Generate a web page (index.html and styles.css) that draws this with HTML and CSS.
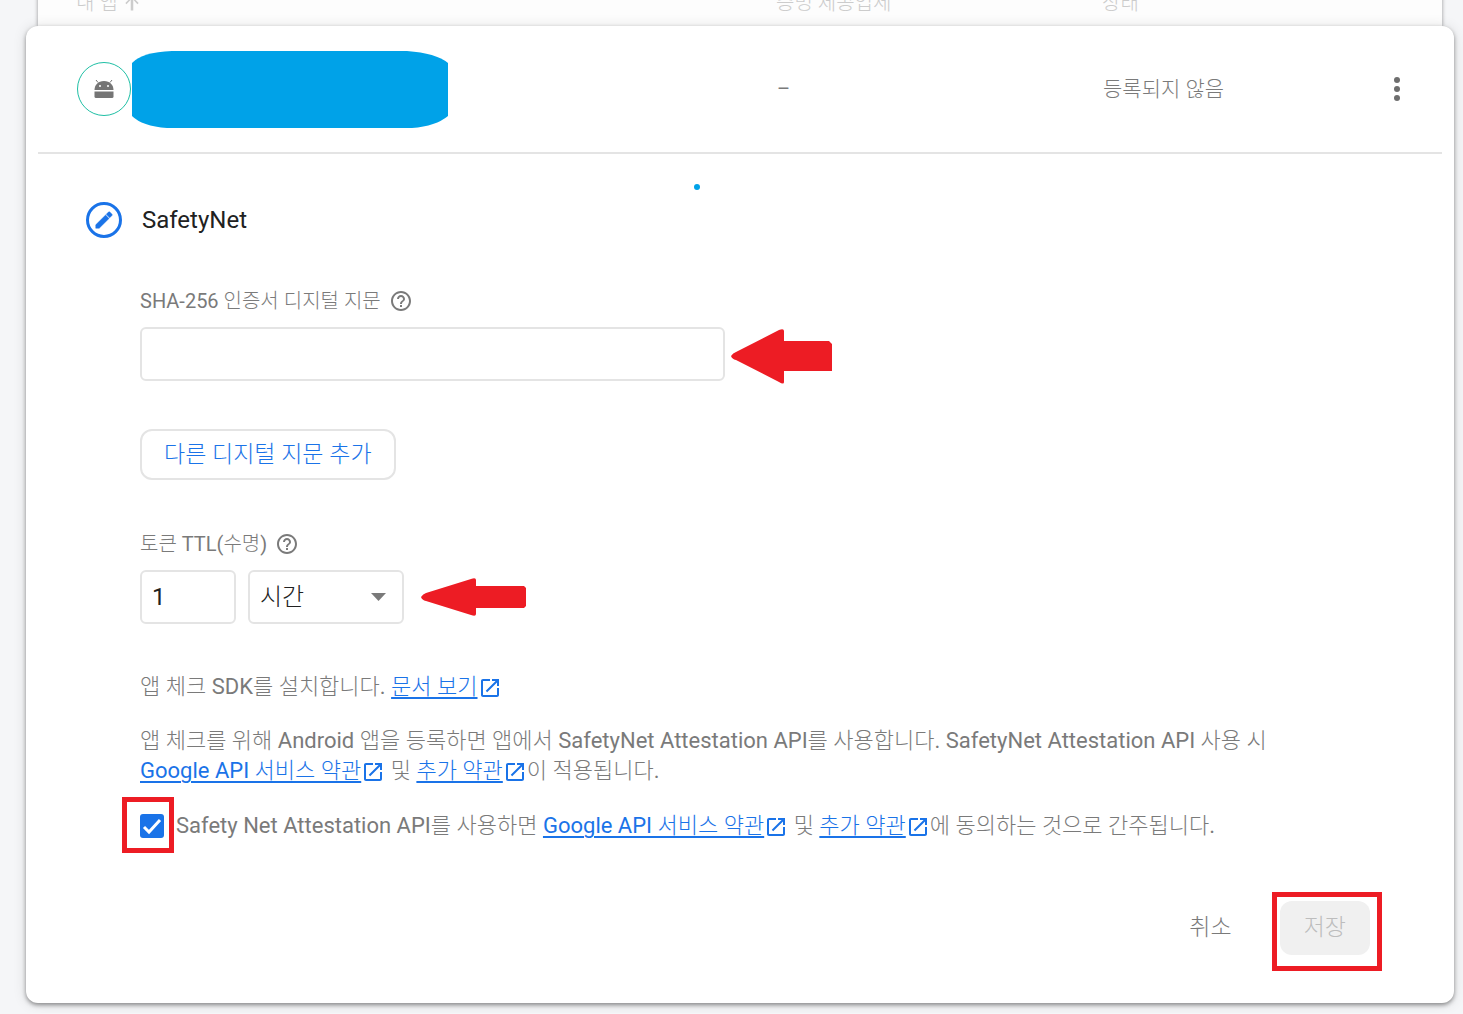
FILE: index.html
```html
<!DOCTYPE html>
<html lang="ko">
<head>
    <meta charset="UTF-8">
    <meta name="viewport" content="width=device-width, initial-scale=1.0">
    <title>앱 체크</title>
    <link rel="stylesheet" href="styles.css">
</head>
<body>
    <!-- shared icon shapes -->
    <svg class="sprite" aria-hidden="true">
        <symbol id="help" viewBox="0 0 24 24">
            <path d="M11 18h2v-2h-2v2zm1-16C6.48 2 2 6.48 2 12s4.48 10 10 10 10-4.48 10-10S17.52 2 12 2zm0 18c-4.41 0-8-3.59-8-8s3.59-8 8-8 8 3.59 8 8-3.59 8-8 8zm0-14c-2.21 0-4 1.79-4 4h2c0-1.1.9-2 2-2s2 .9 2 2c0 2-3 1.75-3 5h2c0-2.25 3-2.5 3-5 0-2.21-1.79-4-4-4z"/>
        </symbol>
        <symbol id="launch" viewBox="0 0 24 24">
            <path d="M19 19H5V5h7V3H5c-1.11 0-2 .9-2 2v14c0 1.1.89 2 2 2h14c1.1 0 2-.9 2-2v-7h-2v7zM14 3v2h3.59l-9.83 9.83 1.41 1.41L19 6.41V10h2V3h-7z"/>
        </symbol>
    </svg>

    <div class="table-head columns">
        <span class="sort">내 앱
            <svg class="sort-icon" viewBox="0 0 24 24"><path d="M4 12l1.400 1.400L10.500 8V21h3V8l5 5.400L20 12l-8-8-8 8z"/></svg>
        </span>
        <span>증명 제공업체</span>
        <span>상태</span>
    </div>

    <main class="card">
        <header class="app-row columns">
            <div class="app">
                <span class="app-icon">
                    <svg viewBox="0 0 20 20">
                        <path d="M0.500 11C0.500 6 4 2 10 2s9.500 4 9.500 9z"/>
                        <path d="M4 3.500L2 1M16 3.500l2-2.500" stroke="#757575" stroke-width="1"/>
                        <circle cx="6" cy="7" r="1" fill="#fff"/>
                        <circle cx="14" cy="7" r="1" fill="#fff"/>
                        <path d="M0.500 12.500h19v5q0 1.500-1.500 1.500H2q-1.500 0-1.500-1.500z"/>
                    </svg>
                </span>
                <svg class="app-name" viewBox="0 0 316 77" preserveAspectRatio="none">
                    <path d="M40 0H275Q304 2 316 12V65Q304 75 280 77H35Q10 75 0 65V12Q10 1 40 0z"/>
                </svg>
            </div>
            <span>–</span>
            <span class="status">등록되지 않음</span>
            <button class="menu-btn" type="button" aria-label="메뉴">
                <svg viewBox="0 0 36 36"><circle cx="18" cy="9" r="3"/><circle cx="18" cy="18" r="3"/><circle cx="18" cy="27" r="3"/></svg>
            </button>
        </header>

        <form class="provider">
            <span class="dot"></span>
            <div class="provider-title">
                <span class="step-icon">
                    <svg viewBox="0 0 24 24"><path d="M3 17.250V21h3.750L17.500 10.300l-3.750-3.750zM18.200 9.600l2.500-2.560c.39-.39.39-1.020 0-1.410l-2.340-2.340c-.39-.39-1.020-.39-1.410 0l-2.500 2.560z" stroke="currentColor" stroke-width="0.500" stroke-linejoin="round"/></svg>
                </span>
                <h2>SafetyNet</h2>
            </div>

            <div class="provider-body">
                <div class="label-row">
                    <label for="fingerprint">SHA-256 인증서 디지털 지문</label>
                    <svg class="help"><use href="#help"/></svg>
                </div>
                <div class="field-row">
                    <input class="field fingerprint" type="text" id="fingerprint">
                    <svg class="arrow arrow-large" viewBox="0 0 101 55"><path d="M0 27Q2 24 5 23L48 1Q53-1 53 2V12H98L101 15V42H53V53Q53 56 48 53L5 31Q1 30 0 27z"/></svg>
                </div>
                <button class="add-btn" type="button">다른 디지털 지문 추가</button>

                <div class="label-row">
                    <label for="ttl">토큰 TTL(수명)</label>
                    <svg class="help"><use href="#help"/></svg>
                </div>
                <div class="field-row">
                    <input class="field ttl" type="text" id="ttl" value="1">
                    <span class="select-wrap">
                        <select class="field" aria-label="단위">
                            <option>시간</option>
                            <option>일</option>
                        </select>
                        <svg class="caret" viewBox="0 0 15 8"><path d="M0 0h15L7.500 8z"/></svg>
                    </span>
                    <svg class="arrow arrow-small" viewBox="0 0 105 38"><path d="M0 19Q2 16 5 15L50 1Q55-1 55 2V8H103L105 10V28L103 30H55V36Q55 39 50 37L5 23Q1 22 0 19z"/></svg>
                </div>

                <p class="install">앱 체크 SDK를 설치합니다. <a href="#">문서 보기</a><svg class="launch"><use href="#launch"/></svg></p>
                <p>앱 체크를 위해 Android 앱을 등록하면 앱에서 SafetyNet Attestation API를 사용합니다. SafetyNet Attestation API 사용 시 <a href="#">Google API 서비스 약관</a><svg class="launch"><use href="#launch"/></svg> 및 <a href="#">추가 약관</a><svg class="launch"><use href="#launch"/></svg>이 적용됩니다.</p>

                <div class="agree">
                    <span class="check">
                        <input type="checkbox" id="agree" checked>
                        <svg viewBox="0 0 24 24"><path d="M4 13l5 5L20 6"/></svg>
                    </span>
                    <label for="agree">Safety Net Attestation API를 사용하면 <a href="#">Google API 서비스 약관</a><svg class="launch"><use href="#launch"/></svg> 및 <a href="#">추가 약관</a><svg class="launch"><use href="#launch"/></svg>에 동의하는 것으로 간주됩니다.</label>
                </div>
            </div>

            <div class="actions">
                <button class="cancel-btn" type="button">취소</button>
                <span class="save">
                    <button class="save-btn" type="submit" disabled>저장</button>
                </span>
            </div>
        </form>
    </main>
</body>
</html>
```

FILE: styles.css
```css
:root {
    --blue: #1a73e8;
    --grey: #7a7a7a;
    --line: #e4e4e4;
    --red: #ed1c24;
}
* {
    box-sizing: border-box;
}
body {
    margin: 0;
    background-color: #f5f6f8;
    color: var(--grey);
    font-family: Roboto, "Noto Sans CJK KR Light", "Noto Sans CJK KR", sans-serif;
    font-size: 20px;
    line-height: 30px;
}
button, input, select {
    font: inherit;
}
button {
    cursor: pointer;
}
a {
    color: var(--blue);
    text-underline-offset: 3px;
    text-decoration-thickness: 2px;
}
svg {
    fill: currentColor;
    flex: none;
}
.sprite {
    display: none;
}
.columns {
    display: grid;
    grid-template-columns: 700px 326px 1fr auto;
    align-items: center;
}

/* table header, scrolled partly out of view */
.table-head {
    margin: -12px 21px 0 38px;
    padding: 0 24px 8px 38px;
    background-color: #fdfdfd;
    color: #ccc;
    box-shadow: 0 1px 4px rgba(0,0,0,0.4);
}
.sort {
    display: flex;
    align-items: center;
    gap: 4px;
}
.sort-icon {
    width: 20px;
    height: 20px;
}

.card {
    position: relative;
    margin: 0 9px 10px 26px;
    padding: 0 12px;
    background-color: #fff;
    border-radius: 12px;
    box-shadow: 0 2px 4px rgba(0,0,0,0.4), 0 1px 14px rgba(0,0,0,0.12);
}
.app-row {
    min-height: 128px;
    padding: 0 27px 0 39px;
    border-bottom: 2px solid #e4e4e4;
}
.app {
    display: flex;
    align-items: center;
    gap: 1px;
}
.app-icon {
    display: grid;
    place-items: center;
    width: 54px;
    height: 54px;
    border: 1px solid #1fbfa5;
    border-radius: 50%;
}
.app-icon svg {
    width: 20px;
    height: 20px;
    color: #757575;
}
.app-name {
    width: 316px;
    height: 77px;
    color: #00a2e8;
}
.status {
    font-size: 21px;
}
.menu-btn {
    display: flex;
    padding: 0;
    border: none;
    background: none;
    color: #6e6e6e;
}
.menu-btn svg {
    width: 36px;
    height: 36px;
}

.provider {
    position: relative;
    padding: 48px 60px 48px 48px;
}
.dot {
    position: absolute;
    top: 30px;
    left: 656px;
    width: 6px;
    height: 6px;
    border-radius: 50%;
    background-color: #00a2e8;
}
.provider-title {
    display: flex;
    align-items: center;
    gap: 20px;
}
.step-icon {
    display: grid;
    place-items: center;
    width: 36px;
    height: 36px;
    border: 3px solid var(--blue);
    border-radius: 50%;
    color: var(--blue);
}
.step-icon svg {
    width: 22px;
    height: 22px;
}
h2 {
    margin: 0;
    color: #212121;
    font-size: 24px;
    font-weight: 400;
}
.provider-body {
    padding-left: 54px;
}
.label-row {
    display: flex;
    align-items: center;
    gap: 8px;
    margin: 48px 0 11px;
}
.help {
    width: 24px;
    height: 24px;
}
.field-row {
    display: flex;
    align-items: center;
    height: 54px;
}
.field {
    height: 54px;
    padding: 0 10px;
    border: 2px solid var(--line);
    border-radius: 6px;
    background-color: #fff;
    color: #212121;
    font-size: 24px;
}
.fingerprint {
    width: 585px;
}
.ttl {
    width: 96px;
    margin-right: 12px;
}
.select-wrap {
    position: relative;
}
.select-wrap .field {
    display: block;
    width: 156px;
    appearance: none;
}
.caret {
    position: absolute;
    top: 23px;
    right: 18px;
    width: 15px;
    height: 8px;
    pointer-events: none;
}
.arrow {
    color: var(--red);
}
.arrow-large {
    width: 101px;
    height: 55px;
    margin: 5px 0 0 6px;
}
.arrow-small {
    width: 105px;
    height: 38px;
    margin-left: 17px;
}
.add-btn {
    display: block;
    height: 51px;
    margin: 48px 0 49px;
    padding: 0 22px;
    border: 2px solid var(--line);
    border-radius: 12px;
    background-color: #fff;
    color: var(--blue);
    font-size: 23px;
}
p {
    max-width: 1130px;
    margin: 24px 0;
    font-size: 22px;
}
.install {
    margin-top: 48px;
}
.launch {
    width: 24px;
    height: 24px;
    color: var(--blue);
    vertical-align: -6px;
}

.agree {
    display: flex;
    align-items: center;
    min-height: 32px;
    font-size: 22px;
}
.check {
    position: relative;
    display: flex;
    margin-right: 12px;
}
.check input {
    width: 24px;
    height: 24px;
    margin: 0;
    border-radius: 3px;
    background-color: var(--blue);
    appearance: none;
}
.check svg {
    position: absolute;
    inset: 0;
    fill: none;
    stroke: #fff;
    stroke-width: 3;
    pointer-events: none;
}
/* red frames around the controls to use */
.check::after, .save::after {
    content: "";
    position: absolute;
    border: 5px solid var(--red);
    pointer-events: none;
}
.check::after {
    inset: -17px -10px -15px -18px;
}
.save::after {
    inset: -9px -12px -16px -8px;
}

.actions {
    display: flex;
    justify-content: flex-end;
    gap: 24px;
    margin: 59px 12px 0 0;
}
.actions button {
    display: block;
    height: 54px;
    padding: 0 24px;
    border: none;
    border-radius: 12px;
    font-size: 23px;
}
.actions .cancel-btn {
    background: none;
    color: var(--grey);
}
.save {
    position: relative;
}
.actions .save-btn {
    background-color: #f0f0f0;
    color: #bdbdbd;
}
```
